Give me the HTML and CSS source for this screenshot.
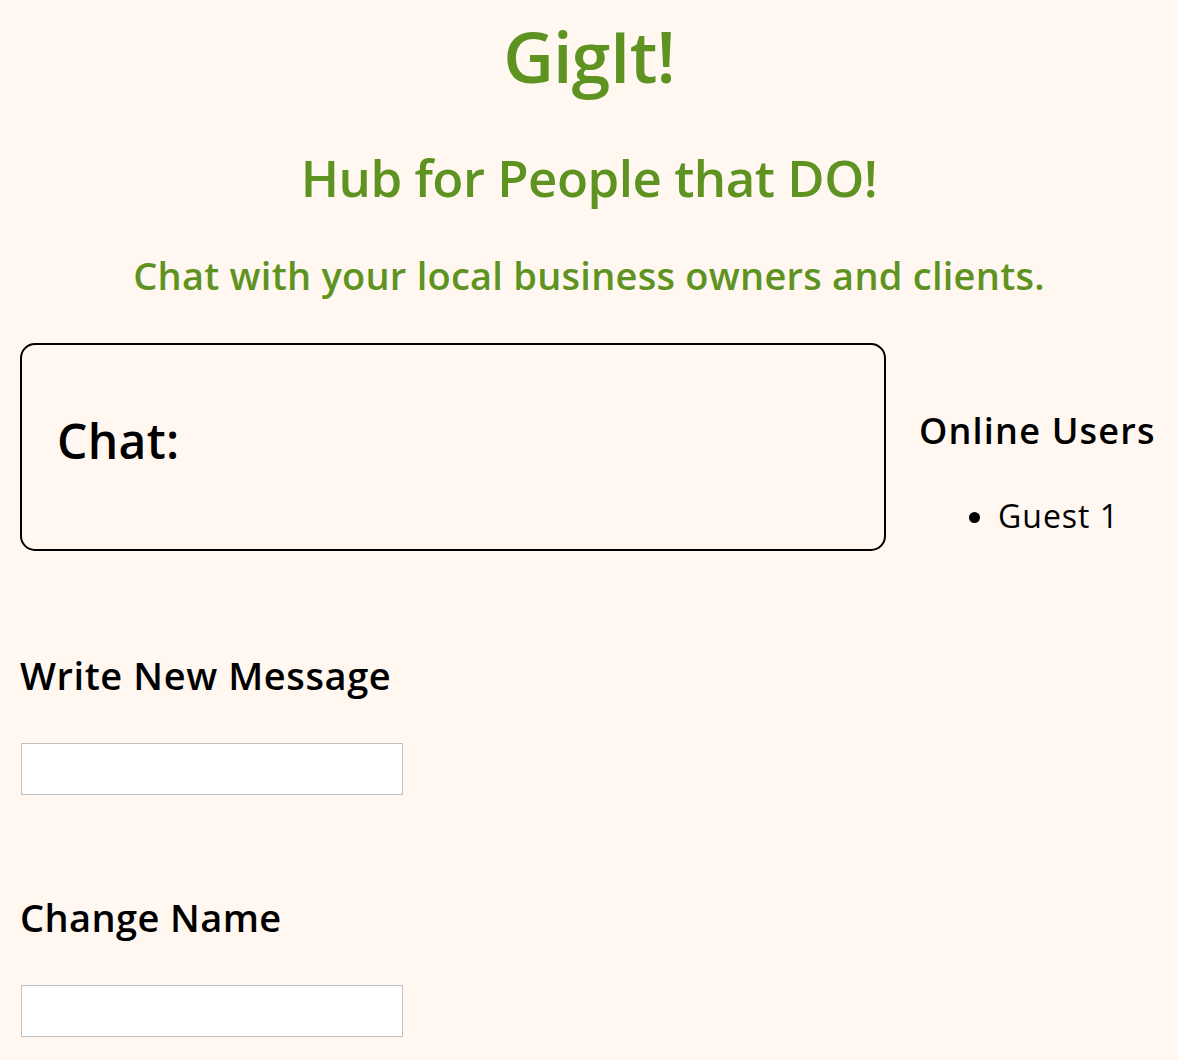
FILE: index.html
```
<!DOCTYPE html>
<html lang="en">
<head>
    <meta charset="UTF-8">
    <meta name="viewport" content="width=device-width, initial-scale=1.0">
    <title>GigIt! Chat</title>
    <link rel="stylesheet" href="styles.css">
</head>
<body>
    <header>
        <h1 class="logo">GigIt!</h1>
        <h2 class="tagline">Hub for People that DO!</h2>
        <h3 class="intro">Chat with your local business owners and clients.</h3>
    </header>
    <div class="main">
        <div class="chat-box">
            <h2 class="chat-title">Chat:</h2>
            <div id="messages"></div>
        </div>
        <div class="users">
            <h3 class="users-title">Online Users</h3>
            <ul class="user-list">
                <li>Guest 1</li>
            </ul>
        </div>
    </div>
    <div class="form-block">
        <h3 class="form-label">Write New Message</h3>
        <input type="text" class="field" id="message">
    </div>
    <div class="form-block second">
        <h3 class="form-label">Change Name</h3>
        <input type="text" class="field" id="name">
    </div>
</body>
</html>
```

FILE: styles.css
```
body {
    margin: 0;
    padding: 0 20px;
    background-color: #fff7f0;
    font-family: "Open Sans", "Noto Sans", sans-serif;
    color: black;
}
header {
    text-align: center;
    color: #5e9322;
}
.logo {
    font-size: 70px;
    font-weight: 600;
    margin: 0;
    padding-top: 11px;
    line-height: 90px;
    letter-spacing: -1px;
}
.tagline {
    font-size: 51px;
    font-weight: 600;
    margin: 46px 0 0;
    line-height: 60px;
    letter-spacing: -0.5px;
}
.intro {
    font-size: 38px;
    font-weight: 600;
    margin: 43px 0 0;
    line-height: 50px;
    letter-spacing: 0.25px;
}
.main {
    display: flex;
    align-items: flex-start;
    margin-top: 43px;
}
.chat-box {
    width: 866px;
    height: 208px;
    box-sizing: border-box;
    border: 2px solid black;
    border-radius: 15px;
    padding: 66px 35px;
}
.chat-title {
    margin: 0;
    font-size: 48px;
    font-weight: 600;
    line-height: 60px;
    letter-spacing: 0.3px;
}
.users {
    margin-left: 33px;
    padding-top: 63px;
}
.users-title {
    margin: 0;
    font-size: 36px;
    font-weight: 600;
    line-height: 50px;
    letter-spacing: 1.2px;
}
.user-list {
    margin: 38px 0 0;
    padding-left: 79px;
    font-size: 32px;
    line-height: 44px;
    letter-spacing: 1px;
}
.form-block {
    margin-top: 99px;
}
.form-block.second {
    margin-top: 97px;
}
.form-label {
    margin: 0;
    font-size: 38px;
    font-weight: 600;
    line-height: 50px;
    letter-spacing: 0.6px;
}
.second .form-label {
    letter-spacing: 0.4px;
}
.field {
    display: block;
    width: 382px;
    height: 52px;
    box-sizing: border-box;
    margin: 43px 0 0 1px;
    border: 1px solid #c0c0c0;
    background: white;
}
```
